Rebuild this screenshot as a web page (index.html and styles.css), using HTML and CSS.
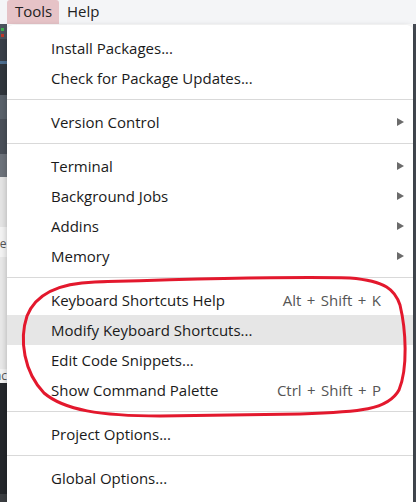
FILE: index.html
```html
<!DOCTYPE html>
<html>
<head>
<meta charset="utf-8">
<link rel="stylesheet" href="styles.css">
</head>
<body>
<div class="app">
  <div class="menubar">
    <span class="mb-item active">Tools</span>
    <span class="mb-item">Help</span>
  </div>
  <div class="workspace">
    <div class="left-strip">
      <div class="s s1"><i class="dot g"></i><i class="dot r"></i></div>
      <div class="s s2"></div>
      <div class="s s3"></div>
      <div class="s s4"></div>
      <div class="s s5"></div>
      <div class="s s6"></div>
      <div class="s s7"></div>
      <div class="s s8"></div>
      <div class="s s9">se</div>
      <div class="s s10"></div>
      <div class="s s11">nc</div>
      <div class="s s12"></div>
      <div class="s s13"></div>
    </div>
    <div class="center"></div>
    <div class="right-strip"></div>
  </div>

  <div class="menu">
    <div class="item"><span class="label">Install Packages...</span></div>
    <div class="item"><span class="label">Check for Package Updates...</span></div>
    <div class="sep"></div>
    <div class="item"><span class="label">Version Control</span><span class="arrow"></span></div>
    <div class="sep"></div>
    <div class="item"><span class="label">Terminal</span><span class="arrow"></span></div>
    <div class="item"><span class="label">Background Jobs</span><span class="arrow"></span></div>
    <div class="item"><span class="label">Addins</span><span class="arrow"></span></div>
    <div class="item"><span class="label">Memory</span><span class="arrow"></span></div>
    <div class="sep"></div>
    <div class="item"><span class="label">Keyboard Shortcuts Help</span><span class="kbd">Alt + Shift + K</span><span class="noarrow"></span></div>
    <div class="item hover"><span class="label">Modify Keyboard Shortcuts...</span></div>
    <div class="item"><span class="label">Edit Code Snippets...</span></div>
    <div class="item"><span class="label">Show Command Palette</span><span class="kbd">Ctrl + Shift + P</span><span class="noarrow"></span></div>
    <div class="sep"></div>
    <div class="item"><span class="label">Project Options...</span></div>
    <div class="sep"></div>
    <div class="item"><span class="label">Global Options...</span></div>
  </div>

  <svg class="annot" width="416" height="502" viewBox="0 0 416 502">
    <path d="M 95 282 C 62 283, 36 293, 27 316 C 19 340, 24 372, 44 393 C 64 410, 100 416, 160 416 L 300 414 C 360 412, 388 410, 399 390 C 408 368, 406 330, 400 305 C 395 290, 386 281, 350 278 C 280 276, 160 280, 95 282"
      fill="none" stroke="#e3182d" stroke-width="3" stroke-linecap="round"/>
  </svg>
</div>
</body>
</html>
```

FILE: styles.css
```css
* { box-sizing: border-box; }
html, body { margin: 0; padding: 0; }
body {
  width: 416px;
  height: 502px;
  overflow: hidden;
  font-family: "Open Sans", "Noto Sans", sans-serif;
  background: #e9e9e9;
}
.app {
  position: relative;
  width: 416px;
  height: 502px;
  display: flex;
  flex-direction: column;
}
.menubar {
  height: 25px;
  background: #f4f5f7;
  display: flex;
  align-items: flex-end;
  padding-left: 7px;
  font-size: 15px;
  color: #222;
}
.mb-item {
  height: 24px;
  padding: 0 7px 0 8px;
  line-height: 23px;
}
.mb-item.active {
  background: #e6c3c7;
  border-radius: 3px 3px 0 0;
  width: 52px;
}
.workspace {
  flex: 1;
  display: flex;
}
.left-strip {
  width: 7px;
  display: flex;
  flex-direction: column;
  overflow: hidden;
  font-size: 12px;
  color: #555;
}
.s { flex: none; position: relative; }
.s1 { height: 15px; background: #4b535d; }
.dot { position: absolute; left: 1px; width: 3px; height: 3px; }
.dot.g { top: 4px; background: #3fb34f; }
.dot.r { top: 10px; background: #c0392b; }
.s2 { height: 22px; background: #3a4049; }
.s3 { height: 3px; background: #4e6f90; }
.s4 { height: 31px; background: #30363d; }
.s5 { height: 24px; background: #59616a; }
.s6 { height: 35px; background: #4a5059; }
.s7 { height: 23px; background: #6d737b; }
.s8 { height: 50px; background: #e4e4e4; }
.s9 { height: 30px; background: #f3f3f3; line-height: 34px; text-indent: -6px; }
.s10 { height: 112px; background: #e8e8e8; }
.s11 { height: 14px; background: #f3f3f3; line-height: 14px; text-indent: -6px; }
.s12 { height: 111px; background: #25282c; }
.s13 { height: 10px; background: #3c3f43; }
.center { flex: 1; background: #ffffff; }
.right-strip { width: 3px; background: #454b53; }

.menu {
  position: absolute;
  top: 25px;
  left: 7px;
  width: 406px;
  height: 490px;
  background: #fff;
  border-radius: 6px 6px 0 0;
  box-shadow: 0 2px 6px rgba(0,0,0,0.25);
  padding-top: 8px;
  font-size: 15px;
  color: #1a1a1a;
}
.item {
  height: 30px;
  display: flex;
  align-items: center;
  padding: 0 9px 0 44px;
  white-space: nowrap;
}
.item.hover { background: #e6e6e6; }
.label { flex: 1; }
.kbd { color: #555; word-spacing: 1.5px; }
.noarrow { width: 23px; }
.arrow {
  width: 23px;
  display: flex;
  justify-content: flex-end;
}
.arrow::after {
  content: "";
  width: 0;
  height: 0;
  border-left: 7px solid #6b6b6b;
  border-top: 4.5px solid transparent;
  border-bottom: 4.5px solid transparent;
}
.sep {
  height: 14px;
  padding-top: 6px;
}
.sep::before {
  content: "";
  display: block;
  height: 1px;
  background: #d9d9d9;
}
.annot {
  position: absolute;
  top: 0;
  left: 0;
  pointer-events: none;
}
```
